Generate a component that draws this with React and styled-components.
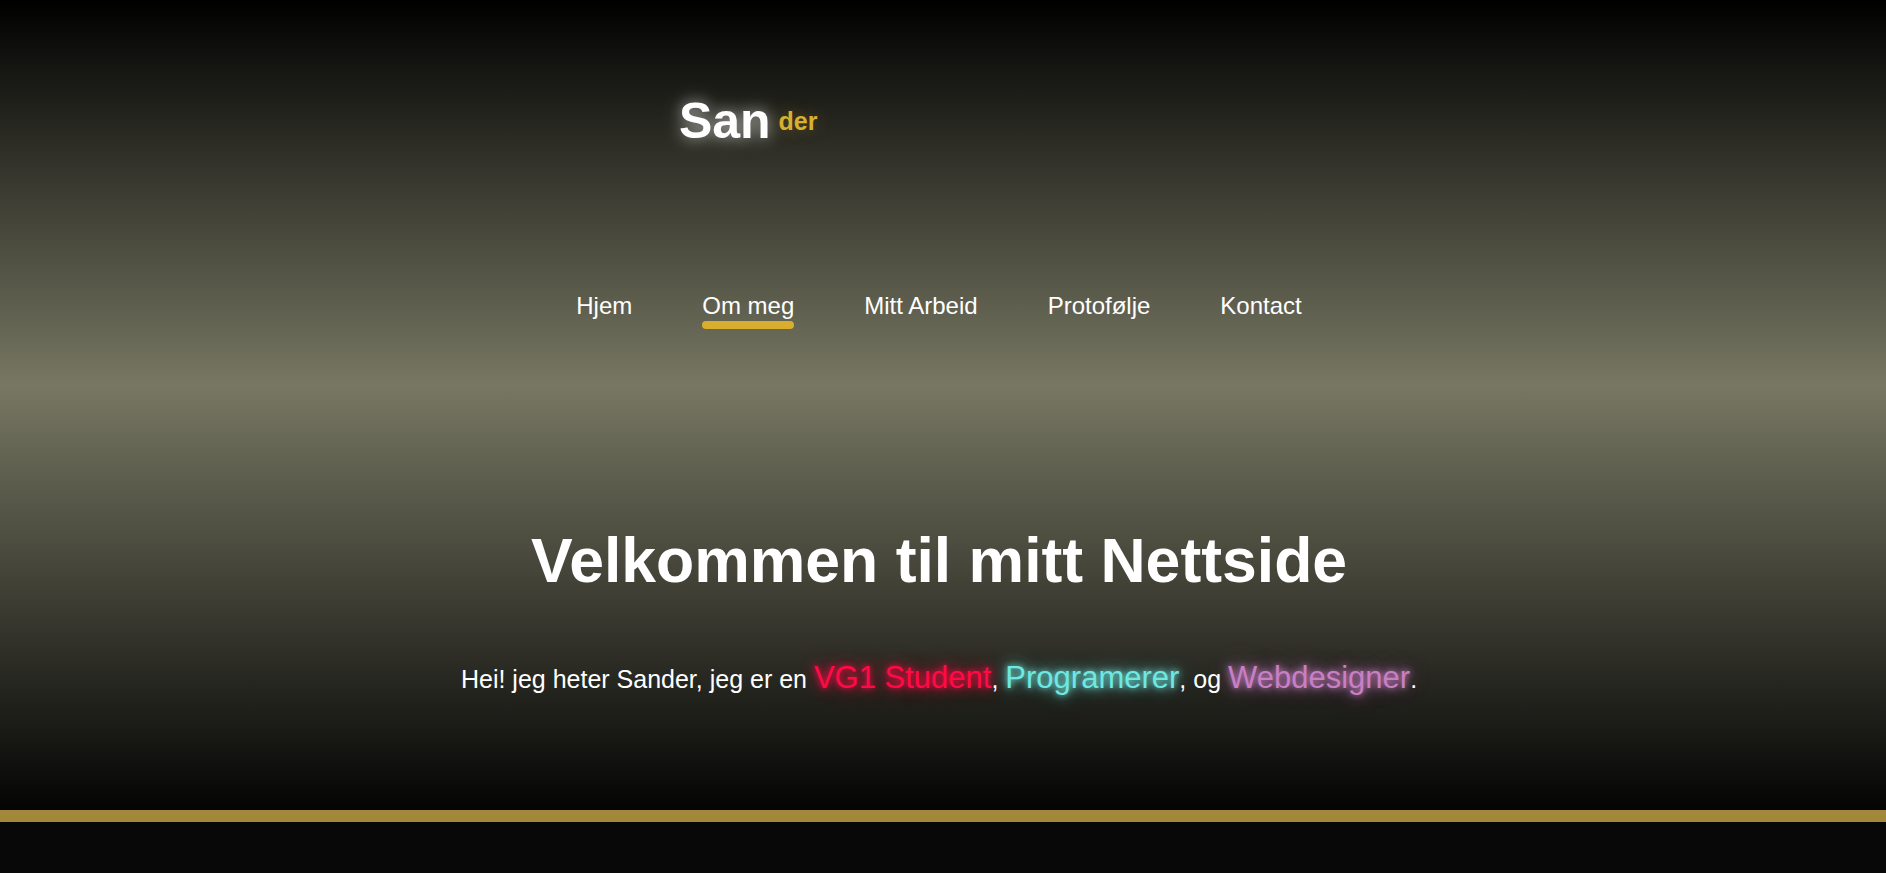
import React from "react";
import styled, { createGlobalStyle } from "styled-components";

const GlobalStyle = createGlobalStyle`
  html, body {
    margin: 0;
    padding: 0;
    background: #080808;
    font-family: "Liberation Sans", Arial, sans-serif;
    color: #fff;
  }
`;

const links = ["Hjem", "Om meg", "Mitt Arbeid", "Protofølje", "Kontact"];

const App = () => {
  const [active, setActive] = React.useState("Om meg");

  return (
    <>
      <GlobalStyle />
      <Hero>
        <Header>
          <Logo>San</Logo>
          <LogoSmall>der</LogoSmall>
        </Header>
        <Nav>
          {links.map((link) => (
            <NavLink
              key={link}
              href="#"
              $active={active === link}
              onClick={(e) => {
                e.preventDefault();
                setActive(link);
              }}
            >
              {link}
            </NavLink>
          ))}
        </Nav>
        <Title>Velkommen til mitt Nettside</Title>
        <Intro>
          Hei! jeg heter Sander, jeg er en <Glow $color="#ff0a45">VG1 Student</Glow>
          , <Glow $color="#6fe8e2">Programerer</Glow>, og{" "}
          <Glow $color="#c97fc4">Webdesigner</Glow>.
        </Intro>
      </Hero>
      <GoldLine />
    </>
  );
};

const Hero = styled.section`
  height: 810px;
  box-sizing: border-box;
  padding: 92px 8px 0 0;
  background: linear-gradient(to bottom, #000 0%, #777763 47.5%, #040404 100%);
  display: flex;
  flex-direction: column;
`;

const Header = styled.header`
  display: flex;
  align-items: center;
  gap: 8px;
  padding-left: 36.15%;
`;

const Logo = styled.span`
  font-size: 50px;
  font-weight: 700;
  color: #fff;
  text-shadow: 0 0 14px rgba(255, 255, 255, 0.55), 0 0 26px rgba(255, 255, 255, 0.25);
`;

const LogoSmall = styled.span`
  font-size: 25px;
  font-weight: 700;
  color: #d8b02f;
  text-shadow: 0 0 16px rgba(216, 176, 47, 0.35);
`;

const Nav = styled.nav`
  margin-top: 142px;
  display: flex;
  justify-content: center;
  align-items: flex-start;
  gap: 70px;
`;

const NavLink = styled.a`
  display: flex;
  flex-direction: column;
  font-size: 24px;
  color: #fff;
  text-decoration: none;

  &::after {
    content: "";
    display: block;
    margin-top: 1px;
    height: 8px;
    border-radius: 4px;
    background: ${(p) => (p.$active ? "#d9ae2f" : "transparent")};
  }
`;

const Title = styled.h1`
  margin: 195px 0 0;
  text-align: center;
  font-size: 62.5px;
  font-weight: 700;
  line-height: normal;
`;

const Intro = styled.p`
  margin: 64px 0 0;
  text-align: center;
  font-size: 25px;
`;

const Glow = styled.span`
  font-size: 31px;
  color: ${(p) => p.$color};
  text-shadow: 0 0 6px ${(p) => p.$color}, 0 0 14px ${(p) => p.$color}aa,
    0 0 24px ${(p) => p.$color}66;
`;

const GoldLine = styled.div`
  height: 12px;
  background: #a3883a;
`;

export default App;
